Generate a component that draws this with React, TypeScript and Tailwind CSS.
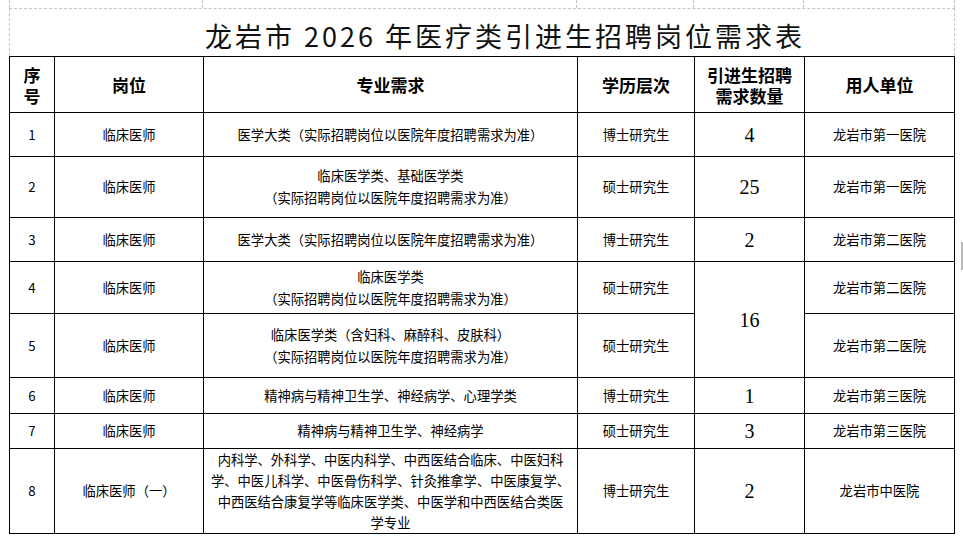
const body = '"Noto Sans CJK SC", "Noto Sans", sans-serif';

type Row = {
  no: string;
  post: string;
  major: string[];
  degree: string;
  count?: string;
  unit: string;
};

const rows: Row[] = [
  { no: "1", post: "临床医师", major: ["医学大类（实际招聘岗位以医院年度招聘需求为准）"], degree: "博士研究生", count: "4", unit: "龙岩市第一医院" },
  { no: "2", post: "临床医师", major: ["临床医学类、基础医学类", "（实际招聘岗位以医院年度招聘需求为准）"], degree: "硕士研究生", count: "25", unit: "龙岩市第一医院" },
  { no: "3", post: "临床医师", major: ["医学大类（实际招聘岗位以医院年度招聘需求为准）"], degree: "博士研究生", count: "2", unit: "龙岩市第二医院" },
  { no: "4", post: "临床医师", major: ["临床医学类", "（实际招聘岗位以医院年度招聘需求为准）"], degree: "硕士研究生", count: "16", unit: "龙岩市第二医院" },
  { no: "5", post: "临床医师", major: ["临床医学类（含妇科、麻醉科、皮肤科）", "（实际招聘岗位以医院年度招聘需求为准）"], degree: "硕士研究生", unit: "龙岩市第二医院" },
  { no: "6", post: "临床医师", major: ["精神病与精神卫生学、神经病学、心理学类"], degree: "博士研究生", count: "1", unit: "龙岩市第三医院" },
  { no: "7", post: "临床医师", major: ["精神病与精神卫生学、神经病学"], degree: "硕士研究生", count: "3", unit: "龙岩市第三医院" },
  {
    no: "8",
    post: "临床医师（一）",
    major: [
      "内科学、外科学、中医内科学、中西医结合临床、中医妇科",
      "学、中医儿科学、中医骨伤科学、针灸推拿学、中医康复学、",
      "中西医结合康复学等临床医学类、中医学和中西医结合类医",
      "学专业",
    ],
    degree: "博士研究生",
    count: "2",
    unit: "龙岩市中医院",
  },
];

// row heights between the 1px grid lines
const heights = ["h-[43px]", "h-[60px]", "h-[43px]", "h-[51px]", "h-[63px]", "h-[35px]", "h-[34px]", "h-[84px]"];

function Cell({ children, className = "" }: { children: React.ReactNode; className?: string }) {
  return <div className={`flex items-center justify-center bg-white text-center ${className}`}>{children}</div>;
}

export default function App() {
  return (
    <div className="relative h-[541px] w-[963px] overflow-hidden bg-white text-black" style={{ fontFamily: body }}>
      <div className="ml-[9px] w-[946px]">
        {/* sheet gridlines above the title */}
        <div className="flex h-[8px] border-l border-dashed border-[#c4c4c4]">
          <div className="w-[193px] border-r border-dashed border-[#c4c4c4]" />
          <div className="w-[374px] border-r border-dashed border-[#c4c4c4]" />
          <div className="w-[117px] border-r border-dashed border-[#c4c4c4]" />
          <div className="w-[110px] border-r border-dashed border-[#c4c4c4]" />
          <div className="flex-1 border-r border-dashed border-[#c4c4c4]" />
        </div>

        <div className="flex h-[48px] items-center justify-center border-x border-t border-dashed border-[#c4c4c4] pl-[46px] pt-[6px]">
          <h1 className="text-[27px] leading-none tracking-[3px] text-[#111]">龙岩市 2026 年医疗类引进生招聘岗位需求表</h1>
        </div>

        <div className="grid grid-cols-[44px_148px_373px_116px_109px_149px] gap-px bg-black p-px">
          {/* header */}
          <Cell className="h-[55px] flex-col text-[17px] font-bold leading-[21px]">
            <span>序</span>
            <span>号</span>
          </Cell>
          <Cell className="text-[17px] font-bold">岗位</Cell>
          <Cell className="text-[17px] font-bold">专业需求</Cell>
          <Cell className="text-[17px] font-bold">学历层次</Cell>
          <Cell className="flex-col text-[17px] font-bold leading-[21px]">
            <span>引进生招聘</span>
            <span>需求数量</span>
          </Cell>
          <Cell className="text-[17px] font-bold">用人单位</Cell>

          {rows.map((r, i) => (
            <div key={r.no} className="contents">
              <Cell className={`${heights[i]} text-[13.3px]`}>{r.no}</Cell>
              <Cell className="text-[13.3px]">{r.post}</Cell>
              <Cell className={`flex-col whitespace-nowrap text-[13.3px] ${r.major.length > 2 ? "leading-[21px]" : "leading-[22px]"}`}>
                {r.major.map((line) => (
                  <span key={line}>{line}</span>
                ))}
              </Cell>
              <Cell className="text-[13.3px]">{r.degree}</Cell>
              {r.count ? (
                <Cell className={`${r.no === "4" ? "row-span-2" : ""} text-[20px]`}>
                  <span style={{ fontFamily: '"Liberation Serif", serif' }}>{r.count}</span>
                </Cell>
              ) : null}
              <Cell className="text-[13.3px]">{r.unit}</Cell>
            </div>
          ))}
        </div>
      </div>

      {/* scroll thumb at the window edge */}
      <div className="absolute left-[961px] top-[242px] h-[28px] w-[2px] bg-[#b8b8b8]" />
    </div>
  );
}
